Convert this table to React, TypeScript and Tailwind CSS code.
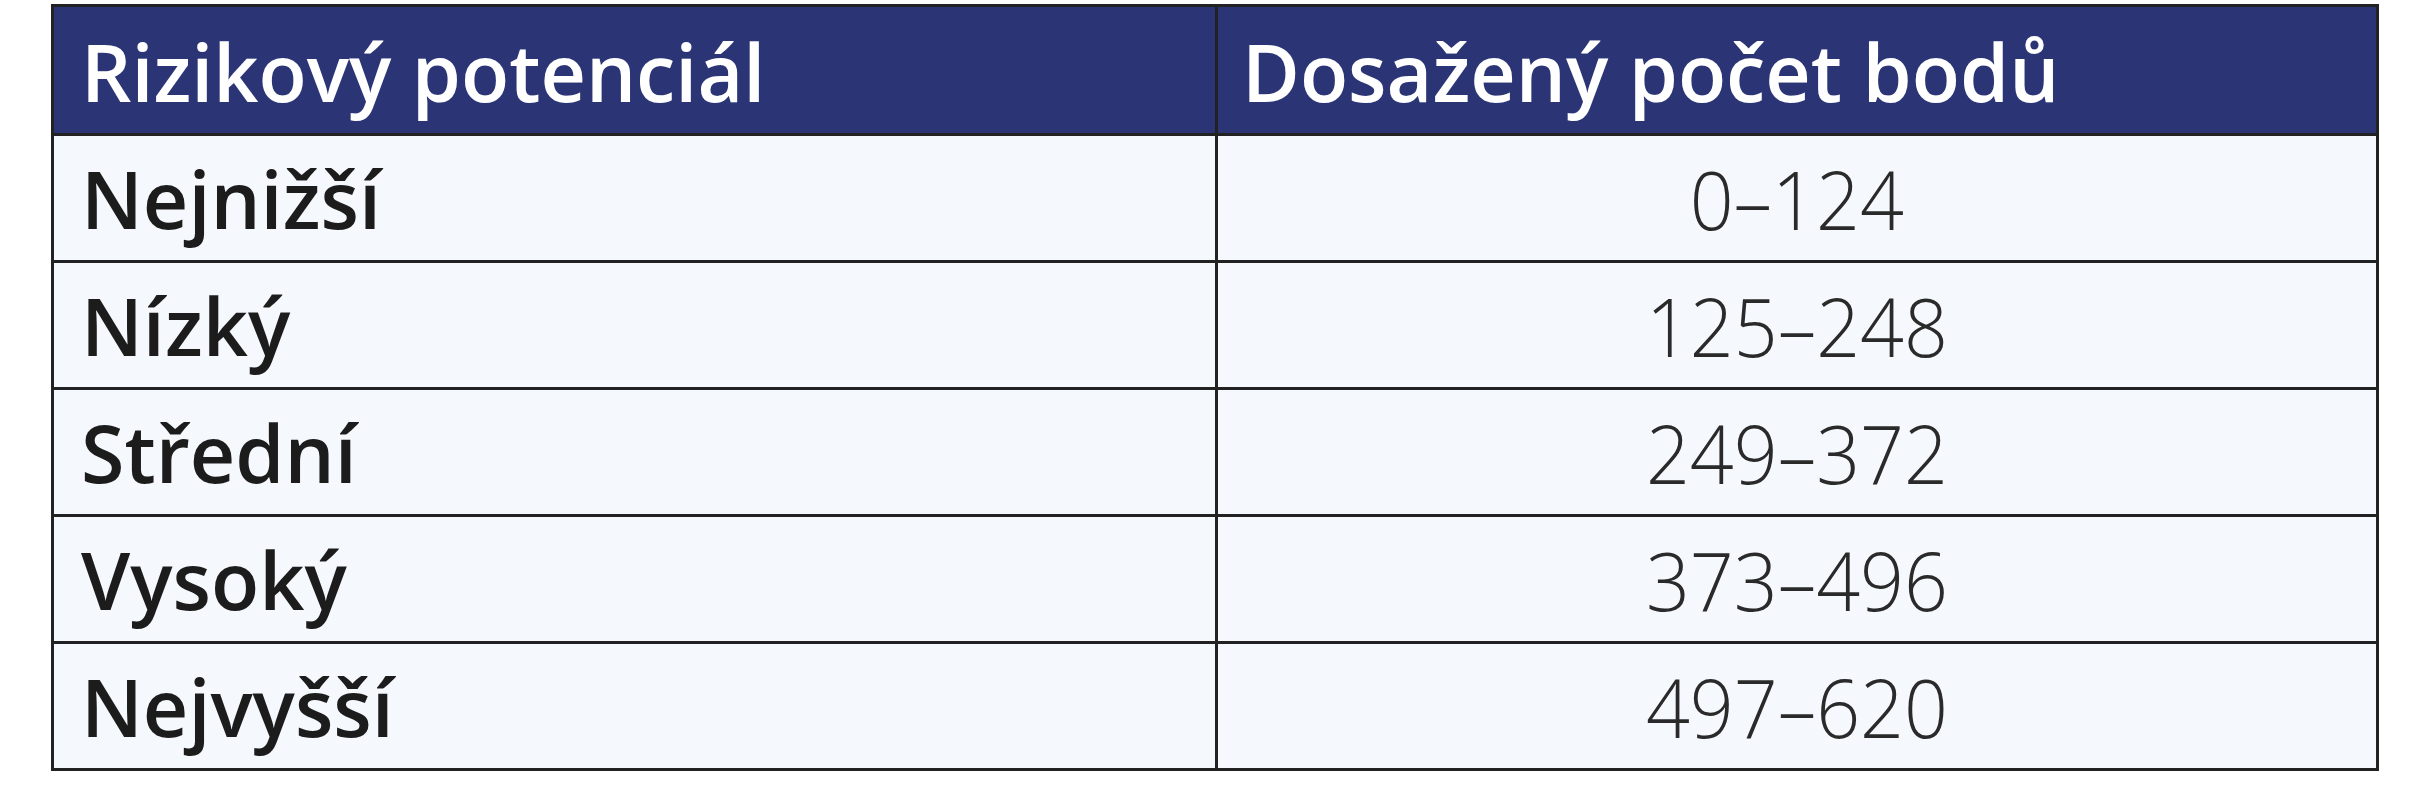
const rows = [
  { label: "Nejnižší", range: "0–124" },
  { label: "Nízký", range: "125–248" },
  { label: "Střední", range: "249–372" },
  { label: "Vysoký", range: "373–496" },
  { label: "Nejvyšší", range: "497–620" },
];

export default function App() {
  return (
    <div className="min-h-[800px] w-full bg-white pt-[4px] font-['Open_Sans',sans-serif]">
      <div className="ml-[51px] w-[2328px] border-[3px] border-[#222222]">
        {/* header */}
        <div className="grid h-[126px] grid-cols-2 bg-[#2b3576] text-white">
          <div className="flex items-center pl-[27px] pt-[3px] text-[79px] font-semibold leading-none">
            Rizikový potenciál
          </div>
          <div className="flex items-center border-l-[3px] border-[#222222] pl-[24px] pt-[3px] text-[79px] font-semibold leading-none">
            Dosažený počet bodů
          </div>
        </div>
        {rows.map((row) => (
          <div
            key={row.label}
            className="grid h-[127px] grid-cols-2 border-t-[3px] border-[#222222] bg-[#f5f9fd]"
          >
            <div className="flex items-center pl-[27px] text-[79px] font-semibold leading-none text-[#1c1c1c]">
              {row.label}
            </div>
            <div className="flex items-center justify-center border-l-[3px] border-[#222222] text-[81px] font-light leading-none text-[#2a2a2a]">
              <span className="inline-block scale-x-[0.95]">{row.range}</span>
            </div>
          </div>
        ))}
      </div>
    </div>
  );
}
